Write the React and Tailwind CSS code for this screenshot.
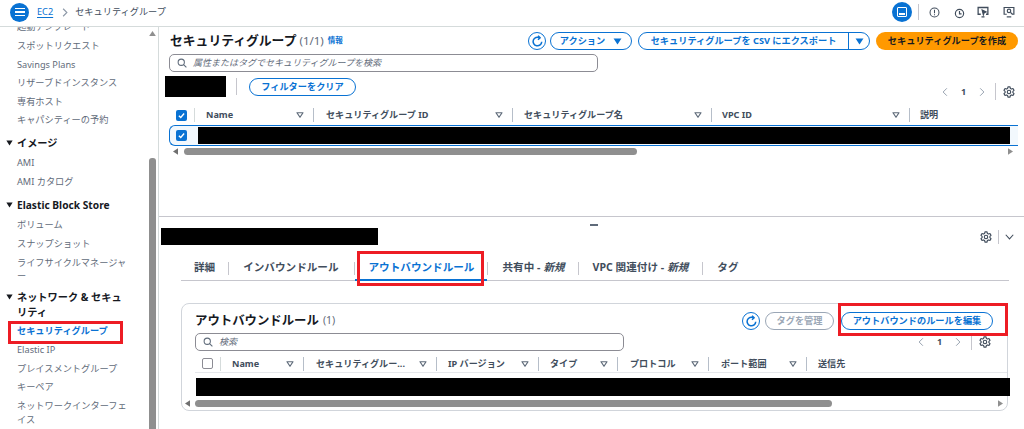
import React from "react";

const font = { fontFamily: '"Noto Sans", "Noto Sans CJK JP", sans-serif' };

function Caret({ className = "w-[9px] h-[7px]" }) {
  return (
    <svg viewBox="0 0 10 8" className={"shrink-0 " + className}>
      <path d="M0.5 0.5H9.5L5 7.5Z" fill="currentColor" />
    </svg>
  );
}

function FilterCaret() {
  return (
    <svg viewBox="0 0 10 8" className="w-[8px] h-[6px] shrink-0 text-[#5f6b7a]">
      <path d="M1 1H9L5 7Z" fill="none" stroke="currentColor" strokeWidth="1.6" strokeLinejoin="round" />
    </svg>
  );
}

function Gear() {
  return (
    <svg viewBox="0 0 16 16" className="w-[12px] h-[12px] text-[#414d5c]" fill="none" stroke="currentColor" strokeWidth="1.5">
      <circle cx="8" cy="8" r="2.3" />
      <path d="M6.6 1.2h2.8l.4 2 1.6.9 1.9-.7 1.4 2.4-1.5 1.3v1.8l1.5 1.3-1.4 2.4-1.9-.7-1.6.9-.4 2H6.6l-.4-2-1.6-.9-1.9.7-1.4-2.4 1.5-1.3V7.1L1.3 5.8l1.4-2.4 1.9.7 1.6-.9z" strokeLinejoin="round" />
    </svg>
  );
}

function Search() {
  return (
    <svg viewBox="0 0 16 16" className="w-[10px] h-[10px] text-[#5f6b7a] shrink-0" fill="none" stroke="currentColor" strokeWidth="1.7">
      <circle cx="6.8" cy="6.8" r="5" />
      <path d="M10.5 10.5L15 15" />
    </svg>
  );
}

function Refresh() {
  return (
    <div className="w-[18px] h-[18px] rounded-full border border-[#0972d3] flex items-center justify-center shrink-0 bg-white">
      <svg viewBox="0 0 16 16" className="w-[13px] h-[13px] text-[#0972d3]" fill="none" stroke="currentColor" strokeWidth="1.9">
        <path d="M13.2 8.2A5.3 5.3 0 1 1 10.5 3.4" />
        <path d="M8.6 0.9L11.3 3.4L8.6 5.9" strokeLinejoin="round" />
      </svg>
    </div>
  );
}

function Check({ on = true }) {
  if (!on)
    return <div className="w-[11px] h-[11px] rounded-[2px] border border-[#8c8c94] bg-white shrink-0" />;
  return (
    <div className="w-[11px] h-[11px] rounded-[2px] bg-[#0972d3] flex items-center justify-center shrink-0">
      <svg viewBox="0 0 12 12" className="w-[9px] h-[9px]" fill="none" stroke="white" strokeWidth="1.8">
        <path d="M2.5 6.2L5 8.7L9.5 3.3" />
      </svg>
    </div>
  );
}

function Pager() {
  return (
    <div className="flex items-center text-[#8d99a8]">
      <svg viewBox="0 0 8 12" className="w-[6px] h-[10px]" fill="none" stroke="currentColor" strokeWidth="1.2"><path d="M6.5 1L1.5 6L6.5 11" /></svg>
      <span className="w-[31px] text-center text-[9px] font-bold text-[#414d5c]">1</span>
      <svg viewBox="0 0 8 12" className="w-[6px] h-[10px]" fill="none" stroke="currentColor" strokeWidth="1.2"><path d="M1.5 1L6.5 6L1.5 11" /></svg>
      <div className="w-px h-[17px] bg-[#c6c6cd] ml-[10px] mr-[7px]" />
      <Gear />
    </div>
  );
}

function Btn({ children, className = "" }) {
  return (
    <div className={"h-[18px] rounded-full border border-[#0972d3] text-[#0972d3] text-[9.2px] font-bold flex items-center justify-center whitespace-nowrap bg-white " + className}>
      {children}
    </div>
  );
}

function SearchBox({ text, className = "" }) {
  return (
    <div className={"h-[18px] rounded-[5px] border border-[#8c8c94] flex items-center gap-[6px] pl-[7px] bg-white " + className}>
      <Search />
      <span className="italic text-[9px] text-[#5f6b7a] whitespace-nowrap">{text}</span>
    </div>
  );
}

function Th({ w, label, pad = "pl-[11px]" }) {
  return (
    <div className={"h-[14px] flex items-center justify-between shrink-0 pr-[9px] border-r border-[#b6bec9] text-[#414d5c] text-[9.1px] font-bold whitespace-nowrap " + pad} style={{ width: w }}>
      <span>{label}</span>
      <FilterCaret />
    </div>
  );
}

function HScroll({ left, right, track, className = "" }) {
  return (
    <div className={"h-[9px] flex items-center relative " + className} style={{ width: track }}>
      <svg viewBox="0 0 6 8" className="w-[5px] h-[7px] text-[#6f6f6f] shrink-0"><path d="M6 0V8L0 4Z" fill="currentColor" /></svg>
      <div className="h-[7px] rounded-full bg-[#8f8f8f] shrink-0" style={{ marginLeft: left, width: right }} />
      <svg viewBox="0 0 6 8" className="w-[5px] h-[7px] text-[#8f8f8f] shrink-0 ml-auto"><path d="M0 0V8L6 4Z" fill="currentColor" /></svg>
    </div>
  );
}

function NavItem({ children, active }) {
  return (
    <div className={"flex items-center pl-[17px] text-[9.2px] h-[18.6px]" + (active ? " font-bold text-[#0972d3]" : " text-[#5f6b7a]")}>
      {children}
    </div>
  );
}

function NavHead({ children, spacing }) {
  return (
    <div className={"flex pl-[6px] pr-[24px] gap-[4px] text-[10.2px] font-bold text-[#16191f] leading-[15px] " + spacing}>
      <Caret className="w-[7px] h-[6px] mt-[4px] text-[#16191f]" />
      <span>{children}</span>
    </div>
  );
}

function Sidebar() {
  return (
    <aside className="w-[159px] shrink-0 border-r border-[#d5dbdb] relative overflow-hidden">
      <div className="-mt-[9px] w-[148px]">
        <NavItem>起動テンプレート</NavItem>
        <NavItem>スポットリクエスト</NavItem>
        <NavItem>Savings Plans</NavItem>
        <NavItem>リザーブドインスタンス</NavItem>
        <NavItem>専有ホスト</NavItem>
        <NavItem>キャパシティーの予約</NavItem>
        <NavHead spacing="mt-[6px] mb-[3px]">イメージ</NavHead>
        <NavItem>AMI</NavItem>
        <NavItem>AMI カタログ</NavItem>
        <NavHead spacing="mt-[7px] mb-[3px]">Elastic Block Store</NavHead>
        <NavItem>ボリューム</NavItem>
        <NavItem>スナップショット</NavItem>
        <div className="pl-[17px] pr-[18px] py-[3px] text-[9.2px] leading-[13.5px] text-[#5f6b7a]">ライフサイクルマネージャー</div>
        <NavHead spacing="mt-[4px] mb-[2px]">ネットワーク &amp; セキュリティ</NavHead>
        <NavItem active>セキュリティグループ</NavItem>
        <NavItem>Elastic IP</NavItem>
        <NavItem>プレイスメントグループ</NavItem>
        <NavItem>キーペア</NavItem>
        <div className="pl-[17px] pr-[18px] py-[3px] text-[9.2px] leading-[13.5px] text-[#5f6b7a]">ネットワークインターフェイス</div>
      </div>
      <div className="absolute right-[2px] top-0 bottom-0 w-[8px] flex flex-col items-center">
        <svg viewBox="0 0 8 6" className="w-[7px] h-[5px] mt-[4px] text-[#8f8f8f]"><path d="M4 0L8 6H0Z" fill="currentColor" /></svg>
        <div className="w-[7px] mt-[122px] flex-1 bg-[#8f8f8f] rounded-t-[3px]" />
      </div>
      <div className="absolute left-[8px] top-[294px] w-[115px] h-[23px] border-[3px] border-[#ed1c24]" />
    </aside>
  );
}

function Header() {
  return (
    <header className="h-[27px] shrink-0 border-b border-[#d5dbdb] flex items-center pl-[10px] pr-[9px] pb-[2px]">
      <div className="w-[19px] h-[19px] rounded-full bg-[#0972d3] flex flex-col items-center justify-center gap-[2px] shrink-0">
        <div className="w-[10px] h-[1.5px] bg-white" /><div className="w-[10px] h-[1.5px] bg-white" /><div className="w-[10px] h-[1.5px] bg-white" />
      </div>
      <span className="ml-[8px] text-[9.2px] text-[#0972d3] underline underline-offset-2">EC2</span>
      <svg viewBox="0 0 8 12" className="w-[6px] h-[9px] ml-[9px] text-[#8d99a8]" fill="none" stroke="currentColor" strokeWidth="1.5"><path d="M1.5 1L6.5 6L1.5 11" /></svg>
      <span className="ml-[7px] text-[9.2px] text-[#414d5c]">セキュリティグループ</span>
      <div className="ml-auto flex items-center">
        <div className="w-[20px] h-[20px] rounded-full bg-[#0972d3] flex items-center justify-center">
          <div className="w-[10px] h-[10px] rounded-[1px] border-[1.5px] border-white flex items-end p-[1px]"><div className="w-full h-[2px] bg-white" /></div>
        </div>
        <div className="w-px h-[16px] bg-[#c6c6cd] ml-[6px]" />
        <svg viewBox="0 0 16 16" className="w-[11px] h-[11px] ml-[10px] text-[#414d5c]" fill="none" stroke="currentColor" strokeWidth="1.5"><circle cx="8" cy="8" r="6.5" /><path d="M8 4V9M8 10.5V12" /></svg>
        <svg viewBox="0 0 16 16" className="w-[11px] h-[11px] ml-[14px] mt-[2px] text-[#414d5c]" fill="none" stroke="currentColor" strokeWidth="1.7"><circle cx="8" cy="8" r="6" /><path d="M8 4.5V8.5H11" /></svg>
        <svg viewBox="0 0 16 16" className="w-[12px] h-[12px] ml-[12px] text-[#414d5c]" fill="none" stroke="currentColor" strokeWidth="1.7"><path d="M5 11H1.5V2H14.5V11H12" /><path d="M7 5.5L12 8L9.5 9L8.5 11.5Z" fill="currentColor" /><path d="M6 14.5H10" /></svg>
        <svg viewBox="0 0 16 16" className="w-[12px] h-[12px] ml-[14px] text-[#414d5c]" fill="none" stroke="currentColor" strokeWidth="1.6"><path d="M5 11H1.5V2H14.5V11H12" /><circle cx="8" cy="6.5" r="2.3" /><path d="M10 8.5L12.5 11" /><path d="M5 14.5H11" /></svg>
      </div>
    </header>
  );
}

function TopSection() {
  return (
    <section className="h-[190px] shrink-0 border-b border-[#c6c6cd] relative">
      <div className="flex items-center h-[27px] pl-[11px] pr-[6px] pt-[1px]">
        <span className="text-[12.8px] font-bold text-[#16191f]">セキュリティグループ</span>
        <span className="ml-[3px] text-[11.5px] text-[#5f6b7a]">(1/1)</span>
        <span className="ml-[4px] text-[7.5px] font-bold text-[#0972d3]">情報</span>
        <div className="ml-auto flex items-center">
          <Refresh />
          <Btn className="w-[82px] ml-[4px] gap-[8px]">アクション<Caret /></Btn>
          <div className="ml-[6px] w-[232px] h-[18px] rounded-full border border-[#0972d3] text-[#0972d3] text-[9.2px] font-bold flex items-center">
            <span className="flex-1 text-center whitespace-nowrap">セキュリティグループを CSV にエクスポート</span>
            <div className="w-[21px] h-full border-l border-[#0972d3] flex items-center justify-center"><Caret /></div>
          </div>
          <div className="ml-[6px] w-[142px] h-[18px] rounded-full bg-[#ff9900] text-[#16191f] text-[9.2px] font-bold flex items-center justify-center whitespace-nowrap">セキュリティグループを作成</div>
        </div>
      </div>
      <SearchBox text="属性またはタグでセキュリティグループを検索" className="w-[429px] ml-[10px]" />
      <div className="flex items-center h-[21px] mt-[4px] pl-[6px] pr-[9px]">
        <div className="w-[61px] h-[21px] bg-black" />
        <div className="w-px h-[17px] bg-[#c6c6cd] ml-[10px]" />
        <Btn className="w-[107px] ml-[12px]">フィルターをクリア</Btn>
        <div className="ml-auto translate-y-[5px] flex"><Pager /></div>
      </div>
      <div className="flex items-center h-[18px] mt-[9px] pl-[17px]">
        <div className="w-[18px] shrink-0 flex"><Check /></div>
        <div className="w-px h-[14px] bg-[#d5dbdb] mr-[-1px]" />
        <Th w="120px" label="Name" pad="pl-[12px]" />
        <Th w="199px" label="セキュリティグループ ID" pad="pl-[12px]" />
        <Th w="199px" label="セキュリティグループ名" />
        <Th w="198px" label="VPC ID" pad="pl-[10px]" />
        <span className="pl-[10px] text-[9.1px] font-bold text-[#414d5c]">説明</span>
      </div>
      <div className="ml-[10px] w-[849px] h-[21px] mt-[1px] rounded-l-[6px] border border-[#0972d3] border-r-0 bg-[#f2f8fd] flex items-center pl-[6px] py-[1px]">
        <Check />
        <div className="ml-[11px] w-[812px] h-[17px] bg-black" />
      </div>
      <HScroll left="6px" right="453px" track="840px" className="ml-[14px] mt-[1px]" />
    </section>
  );
}

function Tab({ children, active, className = "" }) {
  return (
    <div className={"h-full flex items-center relative text-[10.6px] font-bold whitespace-nowrap " + (active ? "text-[#0972d3] " : "text-[#414d5c] ") + className}>
      {children}
      {active && <div className="absolute left-0 right-0 bottom-[-1px] h-[2px] bg-[#0972d3]" />}
    </div>
  );
}

const Sep = () => <div className="w-px h-[13px] bg-[#c6c6cd] shrink-0" />;

function BottomSection() {
  return (
    <section className="flex-1 relative min-h-0">
      <div className="absolute left-[431px] top-[7px] w-[8px] h-[1.5px] bg-[#5f6b7a]" />
      <div className="flex items-center h-[17px] mt-[11px] pl-[2px] pr-[10px]">
        <div className="w-[217px] h-[17px] bg-black" />
        <div className="ml-auto flex items-center">
          <Gear />
          <div className="w-px h-[14px] bg-[#c6c6cd] mx-[6px]" />
          <svg viewBox="0 0 12 8" className="w-[9px] h-[6px] text-[#414d5c]" fill="none" stroke="currentColor" strokeWidth="1.4"><path d="M1 1L6 6.5L11 1" /></svg>
        </div>
      </div>
      <div className="ml-[22px] w-[828px] h-[25px] mt-[11px] border-b border-[#c6c6cd] flex items-center">
        <Tab className="pl-[13px] pr-[13px]">詳細</Tab><Sep />
        <Tab className="pl-[14px] pr-[15px]">インバウンドルール</Tab><Sep />
        <Tab active className="pl-[14px] pr-[13px]">アウトバウンドルール</Tab><Sep />
        <Tab className="pl-[14px] pr-[13px]">共有中 - <i className="ml-[3px]">新規</i></Tab><Sep />
        <Tab className="pl-[14px] pr-[14px]">VPC 関連付け - <i className="ml-[3px]">新規</i></Tab><Sep />
        <Tab className="pl-[14px]">タグ</Tab>
      </div>
      <div className="ml-[22px] w-[827px] h-[108px] mt-[22px] rounded-[8px] border border-[#d1d5db] relative">
        <div className="flex items-center h-[28px] pl-[13px] pr-[14px] pt-[6px]">
          <span className="text-[12.4px] font-bold text-[#16191f]">アウトバウンドルール</span>
          <span className="ml-[4px] text-[10.5px] text-[#5f6b7a]">(1)</span>
          <div className="ml-auto flex items-center">
            <Refresh />
            <div className="ml-[5px] w-[69px] h-[18px] rounded-full border border-[#9ba7b6] text-[#9ba7b6] text-[9.2px] font-bold flex items-center justify-center">タグを管理</div>
            <Btn className="w-[152px] ml-[7px]">アウトバウンドのルールを編集</Btn>
          </div>
        </div>
        <div className="flex items-start pl-[13px] pr-[16px]">
          <SearchBox text="検索" className="w-[429px] mt-[1px]" />
          <div className="ml-auto mt-[1px]"><Pager /></div>
        </div>
        <div className="flex items-center h-[18px] mt-[4px] ml-[13px] border-b border-[#e5e7eb] pl-[7px]">
          <div className="w-[18px] shrink-0 flex"><Check on={false} /></div>
          <Th w="84px" label="Name" pad="pl-[11px] border-l border-l-[#d5dbdb]" />
          <Th w="133px" label="セキュリティグルー..." pad="pl-[12px]" />
          <Th w="102px" label="IP バージョン" />
          <Th w="79px" label="タイプ" />
          <Th w="91px" label="プロトコル" pad="pl-[12px]" />
          <Th w="98px" label="ポート範囲" pad="pl-[12px]" />
          <span className="pl-[11px] text-[9.1px] font-bold text-[#414d5c]">送信先</span>
        </div>
        <div className="ml-[14px] mr-[-3px] h-[18px] mt-[5px] bg-black" />
        <HScroll left="5px" right="637px" track="818px" className="ml-[3px] mt-[3px]" />
      </div>
      <div className="absolute left-[198px] top-[34px] w-[127px] h-[35px] border-[3px] border-[#ed1c24]" />
      <div className="absolute left-[679px] top-[86px] w-[170px] h-[33px] border-[3px] border-[#ed1c24]" />
    </section>
  );
}

export default function App() {
  return (
    <div className="w-[1024px] h-[429px] overflow-hidden bg-white flex flex-col" style={font}>
      <Header />
      <div className="flex flex-1 min-h-0">
        <Sidebar />
        <main className="flex-1 min-w-0 flex flex-col">
          <TopSection />
          <BottomSection />
        </main>
      </div>
    </div>
  );
}
